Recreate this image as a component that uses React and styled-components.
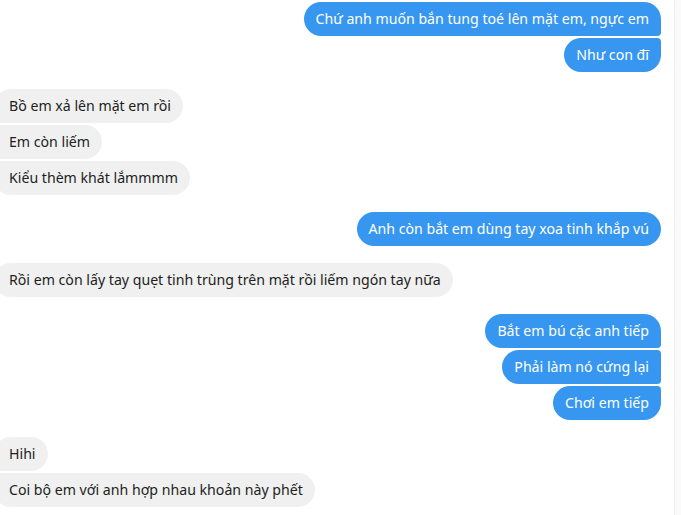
import React from 'react'
import styled, { createGlobalStyle } from 'styled-components'

const Global = createGlobalStyle`
  html, body { margin: 0; padding: 0; background: #fff; }
  body { font-family: "Noto Sans", "Open Sans", "Liberation Sans", sans-serif; }
`

const groups = [
  { me: true, lines: ['Chứ anh muốn bắn tung toé lên mặt em, ngực em', 'Như con đĩ'] },
  { me: false, lines: ['Bồ em xả lên mặt em rồi', 'Em còn liếm', 'Kiểu thèm khát lắmmmm'] },
  { me: true, lines: ['Anh còn bắt em dùng tay xoa tinh khắp vú'] },
  { me: false, lines: ['Rồi em còn lấy tay quẹt tinh trùng trên mặt rồi liếm ngón tay nữa'] },
  { me: true, lines: ['Bắt em bú cặc anh tiếp', 'Phải làm nó cứng lại', 'Chơi em tiếp'] },
  { me: false, lines: ['Hihi', 'Coi bộ em với anh hợp nhau khoản này phết'] },
]

export default function App() {
  return (
    <>
      <Global />
      <Page>
        <Thread>
          {groups.map((g, i) => (
            <Group key={i} $me={g.me}>
              {g.lines.map((t, j) => (
                <Bubble
                  key={j}
                  $me={g.me}
                  $first={j === 0}
                  $last={j === g.lines.length - 1}
                >
                  {t}
                </Bubble>
              ))}
            </Group>
          ))}
        </Thread>
        <Rail />
      </Page>
    </>
  )
}

const Page = styled.div`
  width: 681px;
  height: 515px;
  display: flex;
  overflow: hidden;
`

const Thread = styled.div`
  width: 675px;
  display: flex;
  flex-direction: column;
  gap: 17px;
  padding: 2px 13px 0 0;
  box-sizing: border-box;
  border-right: 1px solid #ececec;
`

const Rail = styled.div`
  flex: 1;
  background: #fafafa;
`

const Group = styled.div`
  display: flex;
  flex-direction: column;
  gap: 2px;
  align-items: ${p => (p.$me ? 'flex-end' : 'flex-start')};
  margin-left: ${p => (p.$me ? '0' : '-6px')};
`

const Bubble = styled.div`
  height: 34px;
  line-height: 34px;
  padding: 0 12px 0 ${p => (p.$me ? '12px' : '15px')};
  font-size: 14.15px;
  white-space: nowrap;
  color: ${p => (p.$me ? '#ffffff' : '#1c1e21')};
  background: ${p => (p.$me ? '#3797f0' : '#f0f0f0')};
  border-radius: ${p =>
    p.$me
      ? `18px ${p.$first ? '18px' : '4px'} ${p.$last ? '18px' : '4px'} 18px`
      : `${p.$first ? '18px' : '4px'} 18px 18px ${p.$last ? '18px' : '4px'}`};
`
